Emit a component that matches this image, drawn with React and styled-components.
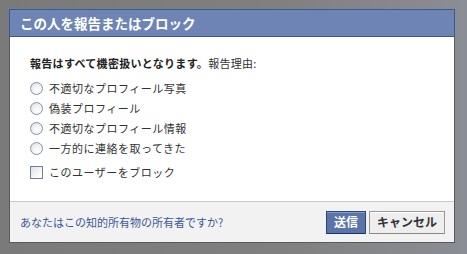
import React from "react";
import styled, { createGlobalStyle } from "styled-components";

const GlobalStyle = createGlobalStyle`
  html, body {
    margin: 0;
    padding: 0;
    background: #7d7d7d;
  }
  body {
    font-family: "Liberation Sans", "Noto Sans CJK JP", sans-serif;
  }
`;

// Dark translucent frame around the dialog
const Frame = styled.div`
  width: 467px;
  height: 254px;
  box-sizing: border-box;
  padding: 9px 12px 12px 9px;
  background: linear-gradient(90deg, #7a7a7a 0%, #808080 60%, #8a8d94 100%);
`;

const Dialog = styled.div`
  background: #fff;
  border: 1px solid #5a5a5a;
  border-top: none;
  display: flex;
  flex-direction: column;
`;

const Header = styled.div`
  height: 26px;
  background: #6d84b4;
  border: 1px solid #3b5998;
  margin: 0 -1px;
  display: flex;
  align-items: center;
  padding-left: 10px;
  color: #fff;
  font-family: "Noto Sans CJK JP", sans-serif;
  font-weight: bold;
  font-size: 13.5px;
`;

const Body = styled.div`
  padding: 18px 20px 19px 20px;
  font-family: "Noto Sans CJK JP", sans-serif;
  font-size: 11px;
  color: #333;
`;

const Intro = styled.div`
  line-height: 16px;
  margin-bottom: 7px;
  letter-spacing: 0.3px;
  b {
    font-weight: bold;
    color: #222;
  }
`;

const OptionRow = styled.label`
  display: flex;
  align-items: center;
  height: 20px;
  gap: 6px;
  margin-top: ${(p) => (p.$spaced ? "4px" : "0")};
  letter-spacing: 0.5px;
  color: #333;
`;

const Radio = styled.input.attrs({ type: "radio" })`
  appearance: none;
  margin: 0;
  width: 13px;
  height: 13px;
  border-radius: 50%;
  border: 1px solid #8593ab;
  background: radial-gradient(circle at 60% 65%, #ffffff 0%, #f4f4f4 40%, #d6d9de 100%);
  box-sizing: border-box;
`;

const Checkbox = styled.input.attrs({ type: "checkbox" })`
  appearance: none;
  margin: 0;
  width: 13px;
  height: 13px;
  border: 1px solid #6f7f99;
  background: linear-gradient(135deg, #dfe2e7 0%, #f6f6f6 60%, #ffffff 100%);
  box-sizing: border-box;
`;

const Footer = styled.div`
  height: 40px;
  border-top: 1px solid #c9c9c9;
  background: #f2f2f2;
  display: flex;
  align-items: center;
  justify-content: space-between;
  padding: 0 9px 0 10px;
`;

const Link = styled.a`
  color: #3b5998;
  font-family: "Noto Sans CJK JP", sans-serif;
  font-size: 11px;
  text-decoration: none;
`;

const Buttons = styled.div`
  display: flex;
  gap: 3px;
`;

const Button = styled.button`
  height: 23px;
  box-sizing: border-box;
  padding: 0 7px;
  font-family: "Noto Sans CJK JP", sans-serif;
  font-weight: bold;
  font-size: 12px;
  line-height: 1;
  border: 1px solid ${(p) => (p.$primary ? "#29447e" : "#999")};
  border-bottom-color: ${(p) => (p.$primary ? "#1a356e" : "#888")};
  background: ${(p) => (p.$primary ? "#5b74a8" : "#eeeeee")};
  color: ${(p) => (p.$primary ? "#fff" : "#333")};
  box-shadow: inset 0 1px 0 ${(p) => (p.$primary ? "#8a9cc2" : "#fff")};
`;

const reasons = [
  "不適切なプロフィール写真",
  "偽装プロフィール",
  "不適切なプロフィール情報",
  "一方的に連絡を取ってきた",
];

export default function App() {
  return (
    <>
      <GlobalStyle />
      <Frame>
        <Dialog>
          <Header>この人を報告またはブロック</Header>
          <Body>
            <Intro>
              <b>報告はすべて機密扱いとなります。</b>報告理由:
            </Intro>
            {reasons.map((r) => (
              <OptionRow key={r}>
                <Radio name="reason" />
                {r}
              </OptionRow>
            ))}
            <OptionRow $spaced>
              <Checkbox />
              このユーザーをブロック
            </OptionRow>
          </Body>
          <Footer>
            <Link href="#">あなたはこの知的所有物の所有者ですか?</Link>
            <Buttons>
              <Button $primary>送信</Button>
              <Button>キャンセル</Button>
            </Buttons>
          </Footer>
        </Dialog>
      </Frame>
    </>
  );
}
